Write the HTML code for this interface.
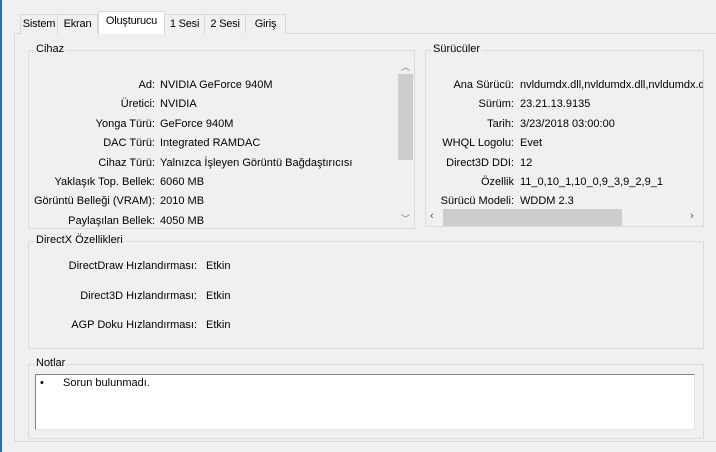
<!DOCTYPE html>
<html><head><meta charset="utf-8"><style>
*{margin:0;padding:0;box-sizing:border-box}
body{width:716px;height:452px;background:#f0f0f0;font-family:"Liberation Sans",sans-serif;font-size:11px;color:#000;position:relative;overflow:hidden}
.a{position:absolute;white-space:nowrap}
.blue{left:0;top:0;width:2px;height:452px;background:#2b6cb8}
.tab{position:absolute;top:14px;height:20px;border:1px solid #d9d9d9;border-bottom:none;background:#f0f0f0;padding:3px 0 0 0;text-align:center;letter-spacing:-0.2px}
.sel{top:11px;height:23px;background:#fff;z-index:2}
.panel{position:absolute;left:14px;top:33px;width:710px;height:409px;border:1px solid #d9d9d9;background:#f0f0f0}
.grp{position:absolute;border:1px solid #dcdcdc}
.gl{position:absolute;background:#f0f0f0;padding:0 2px;top:-8px;left:5px}
.r{text-align:right}
</style></head><body>
<div class="a blue"></div>
<div class="panel"></div>
<div class="tab" style="left:20px;width:38px">Sistem</div>
<div class="tab" style="left:57px;width:41px">Ekran</div>
<div class="tab sel" style="left:98px;width:67px">Oluşturucu</div>
<div class="tab" style="left:164px;width:41px">1 Sesi</div>
<div class="tab" style="left:204px;width:42px">2 Sesi</div>
<div class="tab" style="left:245px;width:41px">Giriş</div>

<div class="grp" style="left:28px;top:50px;width:387px;height:179px"><span class="gl">Cihaz</span></div>
<div class="a" style="left:397px;top:57px;width:17px;height:171px;background:#f0f0f0"></div>
<div class="a" style="left:398px;top:74px;width:15px;height:86px;background:#cdcdcd"></div>
<div class="a" style="left:401px;top:60px;color:#777;font-size:9px">︿</div>
<div class="a" style="left:401px;top:212px;color:#777;font-size:9px">﹀</div>
<div class="a r" style="left:0;width:155px;top:76px;line-height:19.4px">Ad:<br>Üretici:<br>Yonga Türü:<br>DAC Türü:<br>Cihaz Türü:<br>Yaklaşık Top. Bellek:<br>Görüntü Belleği (VRAM):<br>Paylaşılan Bellek:</div>
<div class="a" style="left:160px;top:76px;line-height:19.4px">NVIDIA GeForce 940M<br>NVIDIA<br>GeForce 940M<br>Integrated RAMDAC<br>Yalnızca İşleyen Görüntü Bağdaştırıcısı<br>6060 MB<br>2010 MB<br>4050 MB</div>

<div class="grp" style="left:425px;top:50px;width:279px;height:177px"><span class="gl">Sürücüler</span></div>
<div class="a r" style="left:414px;width:100px;top:76px;line-height:19.4px">Ana Sürücü:<br>Sürüm:<br>Tarih:<br>WHQL Logolu:<br>Direct3D DDI:<br>Özellik<br>Sürücü Modeli:</div>
<div class="a" style="left:520px;top:76px;line-height:19.4px;width:183px;overflow:hidden">nvldumdx.dll,nvldumdx.dll,nvldumdx.dll<br>23.21.13.9135<br>3/23/2018 03:00:00<br>Evet<br>12<br>11_0,10_1,10_0,9_3,9_2,9_1<br>WDDM 2.3</div>
<div class="a" style="left:426px;top:209px;width:277px;height:17px;background:#f0f0f0"></div>
<div class="a" style="left:443px;top:209px;width:179px;height:17px;background:#cdcdcd"></div>
<div class="a" style="left:430px;top:210px;color:#555">‹</div>
<div class="a" style="left:690px;top:210px;color:#555">›</div>

<div class="grp" style="left:28px;top:241px;width:676px;height:108px"><span class="gl">DirectX Özellikleri</span></div>
<div class="a r" style="left:0;width:197px;top:252px;line-height:29.5px">DirectDraw Hızlandırması:<br>Direct3D Hızlandırması:<br>AGP Doku Hızlandırması:</div>
<div class="a" style="left:206px;top:252px;line-height:29.5px">Etkin<br>Etkin<br>Etkin</div>

<div class="grp" style="left:28px;top:364px;width:676px;height:75px"><span class="gl">Notlar</span></div>
<div class="a" style="left:35px;top:374px;width:660px;height:56px;background:#fff;border-top:1px solid #828282;border-left:1px solid #828282;border-right:1px solid #e3e3e3;border-bottom:1px solid #e3e3e3"></div>
<div class="a" style="left:40px;top:377px">•</div>
<div class="a" style="left:63px;top:377px">Sorun bulunmadı.</div>
</body></html>
